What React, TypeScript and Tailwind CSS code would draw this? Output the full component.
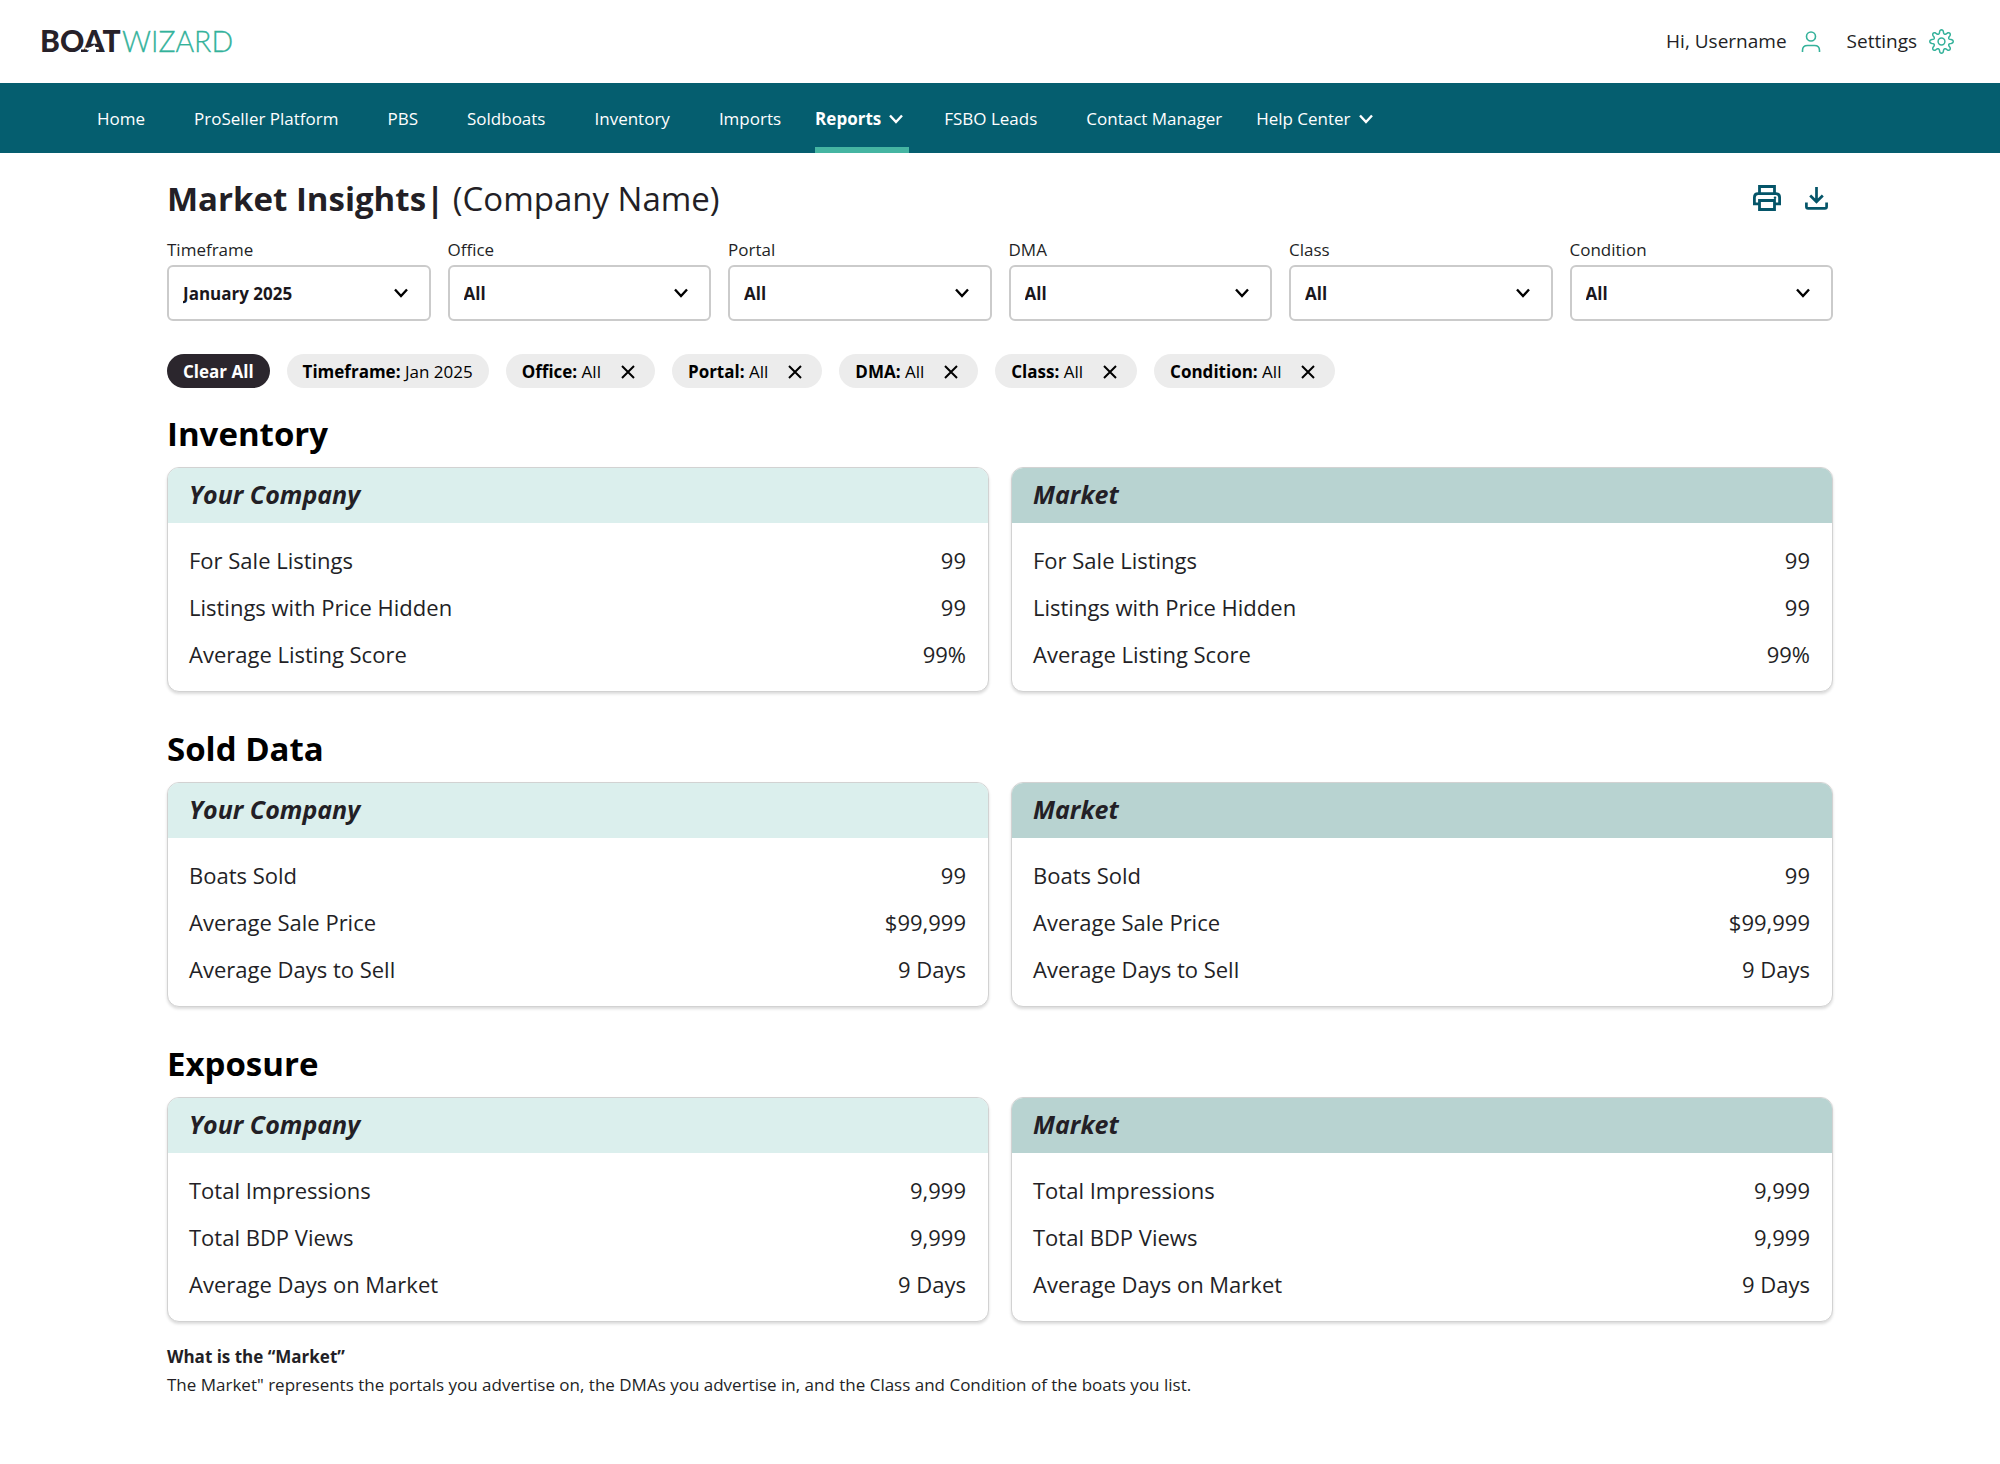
import React from "react";

const navItems = [
  { label: "Home" },
  { label: "ProSeller Platform" },
  { label: "PBS" },
  { label: "Soldboats" },
  { label: "Inventory" },
  { label: "Imports" },
  { label: "Reports", menu: true, active: true },
  { label: "FSBO Leads" },
  { label: "Contact Manager" },
  { label: "Help Center", menu: true },
];

const filters = [
  { label: "Timeframe", value: "January 2025" },
  { label: "Office", value: "All" },
  { label: "Portal", value: "All" },
  { label: "DMA", value: "All" },
  { label: "Class", value: "All" },
  { label: "Condition", value: "All" },
];

const chips = ["Office", "Portal", "DMA", "Class", "Condition"];

const sections = [
  {
    title: "Inventory",
    rows: [
      ["For Sale Listings", "99"],
      ["Listings with Price Hidden", "99"],
      ["Average Listing Score", "99%"],
    ],
  },
  {
    title: "Sold Data",
    rows: [
      ["Boats Sold", "99"],
      ["Average Sale Price", "$99,999"],
      ["Average Days to Sell", "9 Days"],
    ],
  },
  {
    title: "Exposure",
    rows: [
      ["Total Impressions", "9,999"],
      ["Total BDP Views", "9,999"],
      ["Average Days on Market", "9 Days"],
    ],
  },
];

function Chevron({ className }: { className: string }) {
  return (
    <svg viewBox="0 0 14 10" fill="none" stroke="currentColor" strokeWidth="2.4" className={className} aria-hidden="true">
      <path d="M1 1.5 7 8l6-6.5" />
    </svg>
  );
}

function Logo() {
  return (
    <a href="#" className="font-['Lato']" aria-label="BoatWizard">
      <svg width="200" height="44" viewBox="0 0 200 44" aria-hidden="true">
        <text x="0" y="32" fontSize="30" fontWeight="900" fill="#272129">BOAT</text>
        <text x="82" y="32" fontSize="28.5" fontWeight="300" fill="#33b29b" stroke="#33b29b" strokeWidth="0.3">WIZARD</text>
        <path d="M45 27.500c4 .5 7-.5 9.500-3l2 5.500c-3-1.200-7-.6-11 1z" fill="#fff" />
        <path d="M41 29.500h6v2.500h-6zM56 29.500h6v2.500h-6z" fill="#272129" />
      </svg>
    </a>
  );
}

function UserIcon() {
  return (
    <svg width="20" height="22" viewBox="0 0 20 22" fill="none" stroke="#35b29b" strokeWidth="1.6" aria-hidden="true">
      <circle cx="10" cy="5.500" r="4.500" />
      <path d="M1.500 21v-1.500c0-3 2-5 5-5h7c3 0 5 2 5 5V21" />
    </svg>
  );
}

function gearPath() {
  const pts: string[] = [];
  const n = 128;
  for (let i = 0; i < n; i++) {
    const a = (i / n) * Math.PI * 2;
    const c = Math.cos(8 * a);
    const r = 9.8 + 1.9 * Math.sign(c) * Math.pow(Math.abs(c), 0.6);
    pts.push(`${(12.5 + r * Math.cos(a)).toFixed(2)} ${(12.5 + r * Math.sin(a)).toFixed(2)}`);
  }
  return `M${pts.join("L")}Z`;
}

function GearIcon() {
  return (
    <svg width="25" height="25" viewBox="0 0 25 25" fill="none" stroke="#35b29b" strokeWidth="1.5" strokeLinejoin="round" aria-hidden="true">
      <path d={gearPath()} />
      <circle cx="12.5" cy="12.5" r="3.4" />
    </svg>
  );
}

function PrintIcon() {
  return (
    <svg width="28" height="26" viewBox="0 0 28 26" fill="none" stroke="#055569" strokeWidth="2.8" aria-hidden="true">
      <path d="M6.5 8.5V1.5h15v7" />
      <path d="M6.5 18.8H1.4V12.5c0-2.4 1.3-3.9 3.6-3.9h18c2.3 0 3.6 1.5 3.6 3.9v6.3h-5.1" />
      <path d="M6.5 15.5h15v9h-15z" />
      <circle cx="22" cy="12.7" r="1.3" fill="#055569" stroke="none" />
    </svg>
  );
}

function DownloadIcon() {
  return (
    <svg width="23" height="24" viewBox="0 0 23 24" fill="none" stroke="#055569" strokeWidth="2.7" aria-hidden="true">
      <path d="M11.5 1v14.5M5.2 9.5l6.3 6.3 6.3-6.3" />
      <path d="M1.4 16.5v4.2c0 1.1.6 1.7 1.7 1.7h16.8c1.1 0 1.7-.6 1.7-1.7v-4.2" />
    </svg>
  );
}

function Card({ title, header, rows }: { title: string; header: string; rows: string[][] }) {
  return (
    <section className="overflow-hidden rounded-xl border border-[#d2d2d2] bg-white shadow-[0_2px_3px_rgba(0,0,0,0.14)]">
      <h3 className={`px-[21px] pb-[3px] text-[25px] leading-[52px] font-bold italic ${header}`}>{title}</h3>
      <div className="pt-[14px] pr-[22px] pb-[13px] pl-[21px]">
        <table className="w-full text-[22px] leading-[47px]">
          <tbody>
            {rows.map(([k, v]) => (
              <tr key={k}>
                <th scope="row" className="p-0 text-left font-normal">{k}</th>
                <td className="p-0 text-right">{v}</td>
              </tr>
            ))}
          </tbody>
        </table>
      </div>
    </section>
  );
}

export default function App() {
  return (
    <div className="min-h-screen bg-white pb-16 font-['Open_Sans',sans-serif] text-[#231f26]">
      <header className="flex h-[83px] items-center justify-between pr-[46px] pl-10">
        <Logo />
        <div className="flex items-center gap-[26px] text-[19px]">
          <a href="#" className="flex items-center gap-[14px]">
            Hi, Username <UserIcon />
          </a>
          <a href="#" className="flex items-center gap-3">
            Settings <GearIcon />
          </a>
        </div>
      </header>

      <nav className="flex h-[70px] bg-[#055e6f] pl-[72px] text-[17px] text-white">
        {navItems.map((n) => (
          <a key={n.label} href="#" className={n.menu ? "flex px-[10px]" : "flex pr-6 pl-[25px]"}>
            <span
              className={
                n.active
                  ? "flex items-center gap-2 border-b-6 border-[#45b5a2] pt-2 pr-[6px] font-bold"
                  : "flex items-center gap-2 pt-[2px]"
              }
            >
              {n.label}
              {n.menu && <Chevron className="h-[10px] w-[14px]" />}
            </span>
          </a>
        ))}
      </nav>

      <main className="mx-[167px]">
        <div className="flex items-center justify-between pt-[22px] pr-[5px]">
          <h1 className="pt-[2px] text-[33px] leading-[44px]">
            <strong>Market Insights|</strong> (Company Name)
          </h1>
          <div className="flex items-center gap-6">
            <button type="button" aria-label="Print"><PrintIcon /></button>
            <button type="button" aria-label="Download"><DownloadIcon /></button>
          </div>
        </div>

        <div className="mt-4 grid grid-cols-6 gap-[17px]">
          {filters.map((f) => (
            <label key={f.label} className="block text-[17px] leading-[26px]">
              {f.label}
              <span className="relative mt-[2px] block">
                <select className="h-14 w-full appearance-none rounded-md border-2 border-[#cbcbcb] bg-white px-[14px] pt-[2px] text-[17px] font-bold text-[#1a171c]">
                  <option>{f.value}</option>
                </select>
                <Chevron className="pointer-events-none absolute top-[23px] right-[23px] h-[10px] w-[14px] text-black" />
              </span>
            </label>
          ))}
        </div>

        <div className="mt-[33px] flex gap-[17px] text-[17px] leading-[33px] text-black">
          <button type="button" className="rounded-full bg-[#2b262d] px-4 pt-px font-bold text-white">Clear All</button>
          <span className="rounded-full bg-[#ececec] px-4 pt-px"><b>Timeframe:</b> Jan 2025</span>
          {chips.map((c) => (
            <span key={c} className="flex items-center gap-5 rounded-full bg-[#ececec] pt-px pr-5 pl-4">
              <span><b>{c}:</b> All</span>
              <button type="button" aria-label={`Remove ${c}`}>
                <svg width="14" height="14" viewBox="0 0 14 14" stroke="currentColor" strokeWidth="2" aria-hidden="true">
                  <path d="M1 1l12 12M13 1 1 13" />
                </svg>
              </button>
            </span>
          ))}
        </div>

        <div className="mt-[22px] flex flex-col gap-[33px]">
          {sections.map((s) => (
            <section key={s.title}>
              <h2 className="text-[33px] leading-[48px] font-bold text-black">{s.title}</h2>
              <div className="mt-[9px] grid grid-cols-2 gap-[22px]">
                <Card title="Your Company" header="bg-[#dbefed]" rows={s.rows} />
                <Card title="Market" header="bg-[#b8d3d1]" rows={s.rows} />
              </div>
            </section>
          ))}
        </div>

        <h4 className="mt-[21px] text-[17px] leading-7 font-bold">What is the “Market”</h4>
        <p className="text-[17px] leading-7">
          The Market" represents the portals you advertise on, the DMAs you advertise in, and the Class and Condition of the boats you list.
        </p>
      </main>
    </div>
  );
}
